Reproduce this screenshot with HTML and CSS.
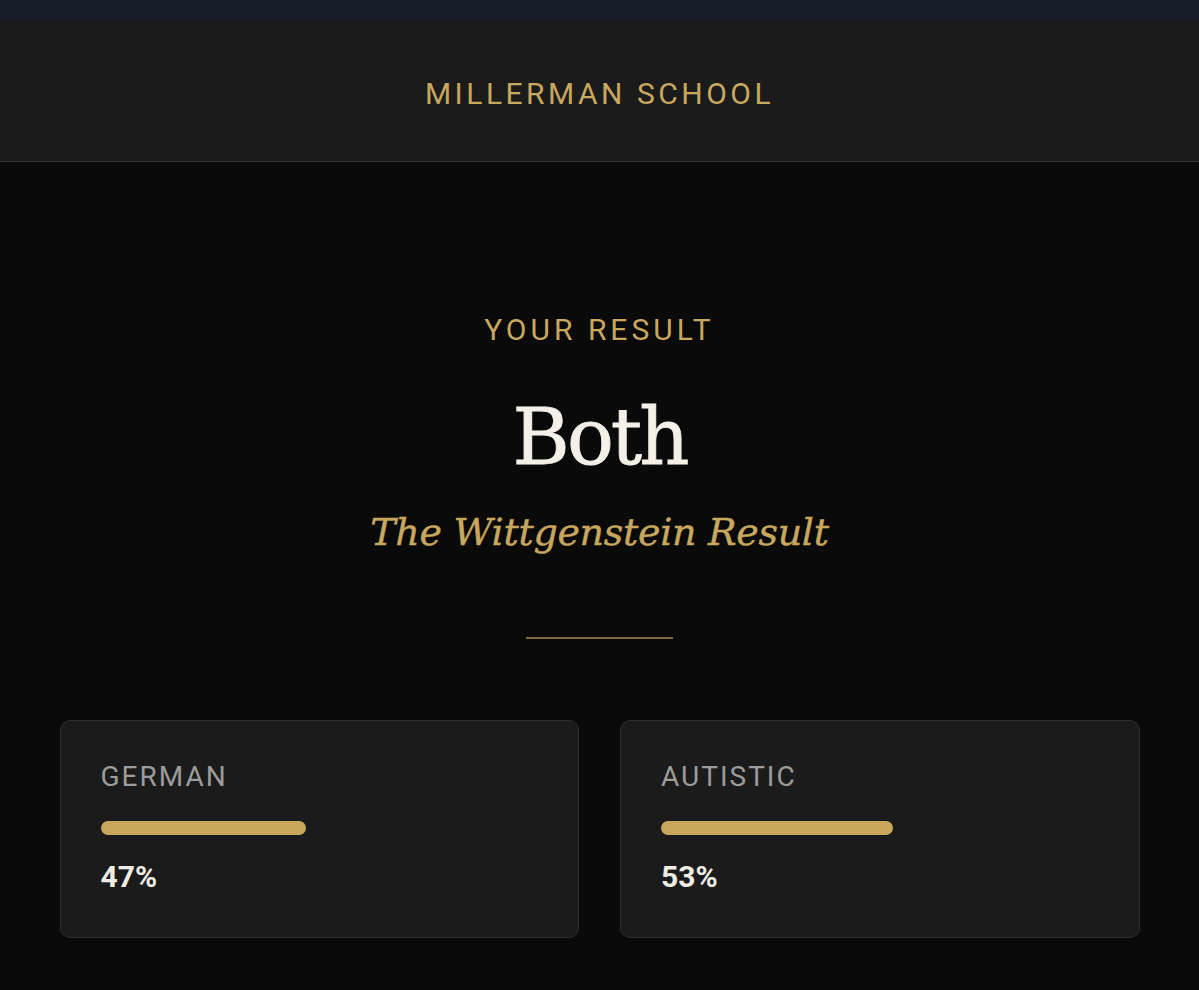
FILE: index.html
```html
<!DOCTYPE html>
<html lang="en">
<head>
<meta charset="utf-8">
<title>Millerman School — Your Result</title>
<link rel="stylesheet" href="styles.css">
</head>
<body>
<div class="topbar"></div>
<header class="site-header">
  <div class="brand">MILLERMAN SCHOOL</div>
</header>
<main class="result">
  <div class="eyebrow">YOUR RESULT</div>
  <h1 class="title">Both</h1>
  <p class="subtitle">The Wittgenstein Result</p>
  <div class="divider"></div>
  <section class="scores">
    <div class="card">
      <div class="label">GERMAN</div>
      <div class="track"><div class="fill" style="width:47%"></div></div>
      <div class="pct">47%</div>
    </div>
    <div class="card">
      <div class="label">AUTISTIC</div>
      <div class="track"><div class="fill" style="width:53%"></div></div>
      <div class="pct">53%</div>
    </div>
  </section>
</main>
</body>
</html>
```
FILE: styles.css
```css
* { box-sizing: border-box; }
html, body { margin: 0; padding: 0; }
body {
  background: #0a0a0a;
  font-family: Roboto, "Liberation Sans", sans-serif;
  min-height: 990px;
}
.topbar {
  height: 20px;
  background: #161f29;
}
.site-header {
  height: 142px;
  background: #1b1b1b;
  border-bottom: 1px solid #353535;
  display: flex;
  justify-content: center;
  align-items: center;
  padding-top: 6px;
}
.brand {
  color: #c8a85f;
  font-size: 30px;
  line-height: 1;
  letter-spacing: 3.5px;
  font-weight: 400;
}
.result {
  padding-top: 153px;
  display: flex;
  flex-direction: column;
  align-items: center;
}
.eyebrow {
  color: #c8a85f;
  font-size: 30px;
  line-height: 1;
  letter-spacing: 4px;
}
.title {
  margin: 53px 0 0;
  font-family: "DejaVu Serif", "Liberation Serif", serif;
  font-weight: 400;
  font-size: 78px;
  line-height: 1;
  letter-spacing: -3px;
  color: #f4f0e7;
  -webkit-text-stroke: 0.8px #f4f0e7;
}
.subtitle {
  margin: 37px 0 0;
  font-family: "DejaVu Serif", "Liberation Serif", serif;
  font-style: italic;
  font-size: 38px;
  line-height: 1;
  letter-spacing: -0.3px;
  color: #c8a85f;
  -webkit-text-stroke: 0.4px #c8a85f;
}
.divider {
  margin-top: 86px;
  width: 147px;
  height: 2px;
  background: #7d6a43;
}
.scores {
  margin-top: 81px;
  width: 100%;
  max-width: 1080px;
  display: grid;
  grid-template-columns: 1fr 1fr;
  gap: 41px;
}
.card {
  background: #1b1b1b;
  border: 1px solid #2e2e2e;
  border-radius: 10px;
  padding: 42px 40px 45px;
}
.label {
  color: #9c9c9c;
  font-size: 28px;
  line-height: 1;
  letter-spacing: 2px;
}
.track {
  margin-top: 30px;
  height: 14px;
  border-radius: 7px;
}
.fill {
  height: 100%;
  background: #c9a85c;
  border-radius: 7px;
}
.pct {
  margin-top: 27px;
  color: #efece4;
  font-size: 30px;
  font-weight: 700;
  line-height: 1;
}
```
